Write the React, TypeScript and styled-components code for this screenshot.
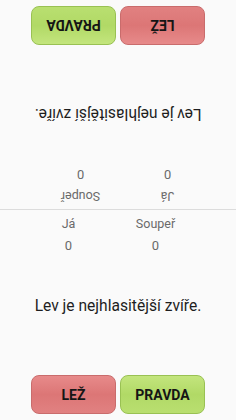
import React, { FunctionComponent } from 'react';
import styled, { createGlobalStyle } from 'styled-components';

const GlobalStyle = createGlobalStyle`
  html, body {
    margin: 0;
    padding: 0;
    background: #fafafa;
    font-family: Roboto, "Noto Sans", sans-serif;
  }
`;

const Screen = styled.div`
  width: 236px;
  height: 420px;
  display: flex;
  flex-direction: column;
  background: #fafafa;
  overflow: hidden;
`;

const Half = styled.div<{ $flipped?: boolean }>`
  height: 210px;
  display: flex;
  flex-direction: column;
  transform: ${p => (p.$flipped ? 'rotate(180deg)' : 'none')};
`;

const Divider = styled.div`
  height: 1px;
  background: #dcdcdc;
  margin-top: -1px;
`;

const Scores = styled.div`
  display: grid;
  grid-template-columns: 87px 87px;
  padding: 6px 0 0 25px;
  row-gap: 6px;
`;

const ScoreLabel = styled.div`
  text-align: center;
  font-size: 12.5px;
  line-height: 16px;
  color: #6a6a6a;
`;

const ScoreValue = styled.div`
  text-align: center;
  font-size: 13px;
  line-height: 16px;
  color: #6a6a6a;
`;

const Statement = styled.div`
  margin-top: 42px;
  text-align: center;
  font-size: 15.6px;
  line-height: 20px;
  color: #1e1e1e;
`;

const Buttons = styled.div`
  margin-top: auto;
  margin-bottom: 6px;
  display: flex;
  justify-content: center;
  gap: 4px;
`;

const AnswerButton = styled.button<{ $kind: 'lie' | 'truth' }>`
  width: 85px;
  height: 39px;
  border-radius: 8px;
  border: 1px solid ${p => (p.$kind === 'lie' ? '#c96c6c' : '#99c153')};
  background: ${p =>
    p.$kind === 'lie'
      ? 'linear-gradient(#e78a8a, #dc7676 50%, #e18181)'
      : 'linear-gradient(#c3e57d, #b1d966 50%, #b9df70)'};
  font-family: Roboto, "Noto Sans", sans-serif;
  font-weight: bold;
  font-size: 14px;
  color: #151515;
  padding: 0;
`;

interface PlayerProps {
  flipped?: boolean;
}

const PlayerSide: FunctionComponent<PlayerProps> = ({ flipped }) => (
  <Half $flipped={flipped}>
    <Scores>
      <ScoreLabel>Já</ScoreLabel>
      <ScoreLabel>Soupeř</ScoreLabel>
      <ScoreValue>0</ScoreValue>
      <ScoreValue>0</ScoreValue>
    </Scores>
    <Statement>Lev je nejhlasitější zvíře.</Statement>
    <Buttons>
      <AnswerButton $kind="lie">LEŽ</AnswerButton>
      <AnswerButton $kind="truth">PRAVDA</AnswerButton>
    </Buttons>
  </Half>
);

const App: FunctionComponent = () => (
  <>
    <GlobalStyle />
    <Screen>
      <PlayerSide flipped />
      <Divider />
      <PlayerSide />
    </Screen>
  </>
);

export default App;
